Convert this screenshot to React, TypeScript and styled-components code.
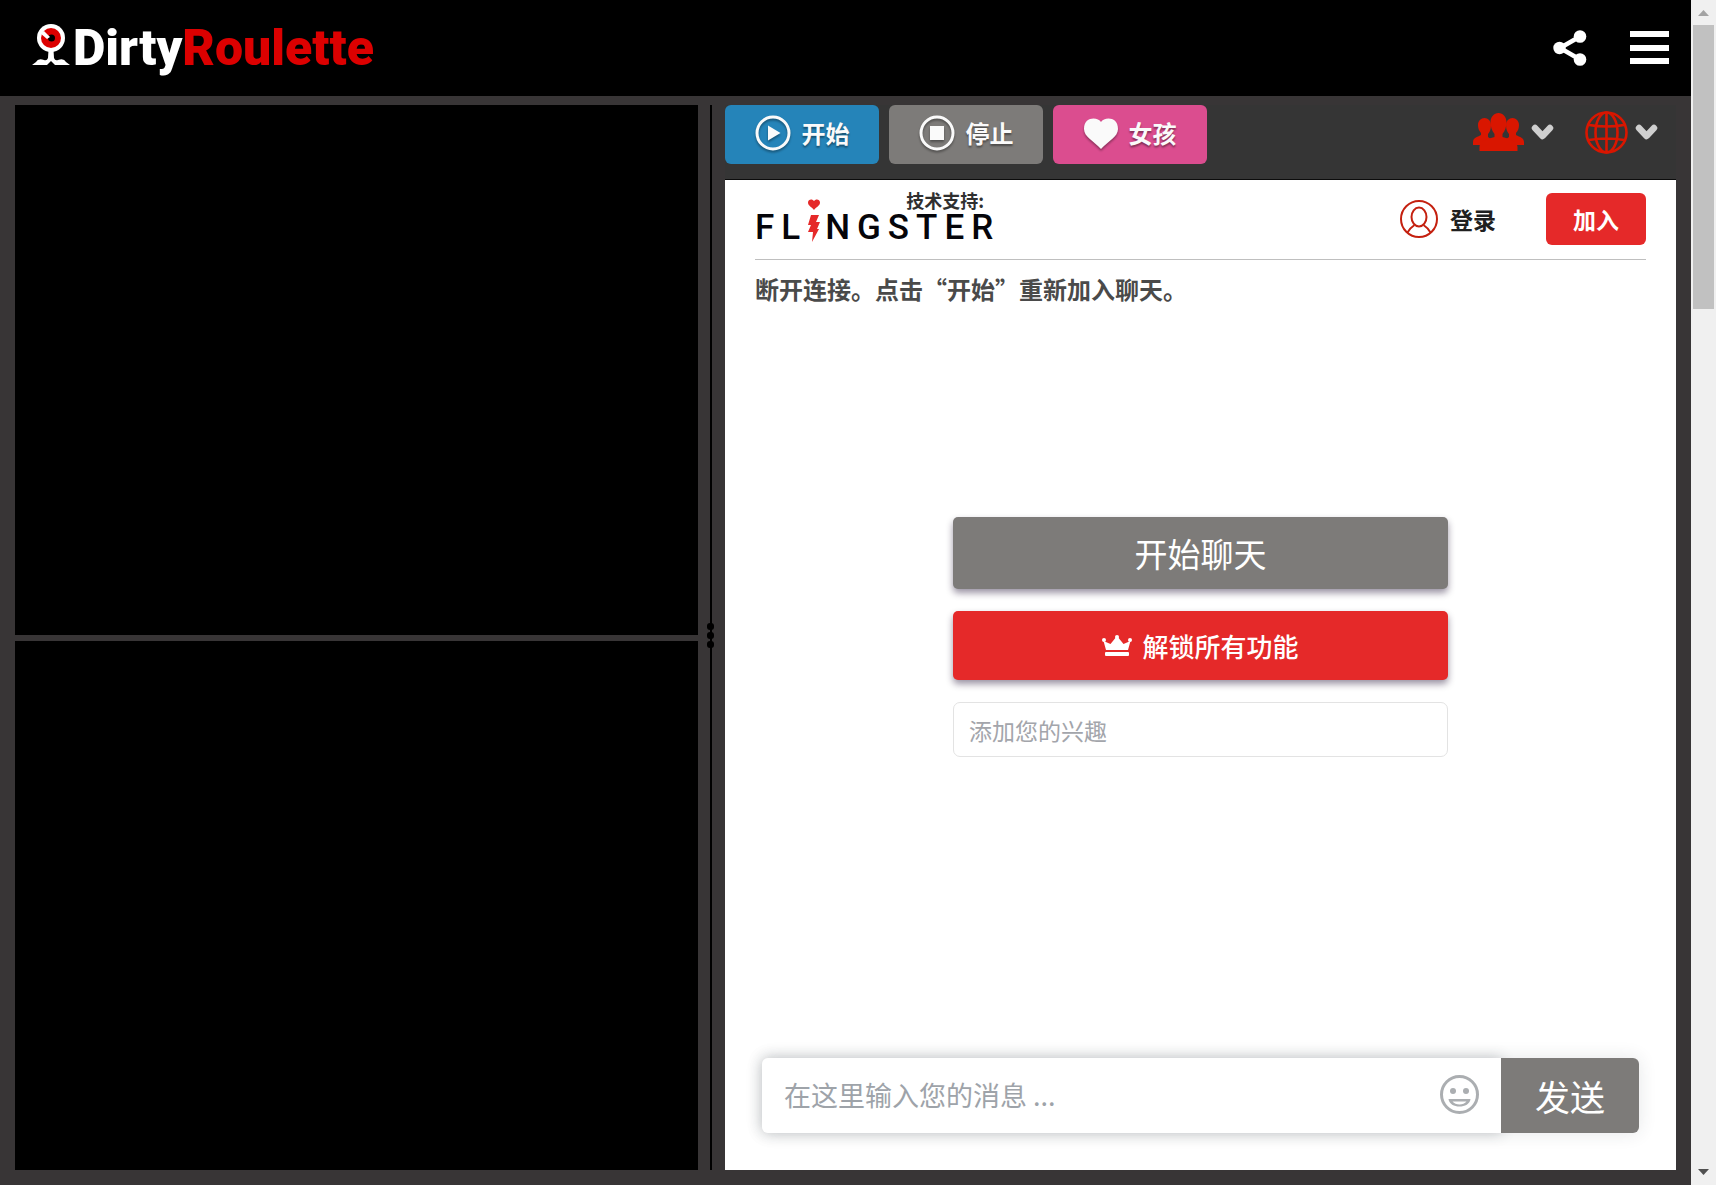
import React from "react";
import styled, { createGlobalStyle, css } from "styled-components";

const GlobalStyle = createGlobalStyle`
  *, *::before, *::after { box-sizing: border-box; }
  body {
    margin: 0;
    background: #383536;
    font-family: "Noto Sans CJK SC", "Liberation Sans", sans-serif;
  }
  button, input { font-family: inherit; }
`;

const plainButton = css`
  display: flex;
  align-items: center;
  padding: 0;
  border: 0;
  background: none;
  cursor: pointer;
`;

const Page = styled.div`
  display: grid;
  grid-template-columns: minmax(0, 1fr) 25px;
  height: 100vh;
  min-height: 720px;
`;

const Main = styled.div`
  display: flex;
  flex-direction: column;
  min-height: 0;
`;

const Header = styled.header`
  display: flex;
  align-items: center;
  justify-content: space-between;
  height: 96px;
  padding: 0 22px 0 32px;
  background: #000;
`;

const Logo = styled.a`
  display: flex;
  align-items: center;
  gap: 3px;
  color: #fff;
  font: 900 50px/64px Roboto, "Liberation Sans", sans-serif;
  text-decoration: none;
`;

const LogoAccent = styled.span`
  color: #dc0000;
`;

const HeaderActions = styled.div`
  display: flex;
  align-items: center;
  gap: 43px;
`;

const IconButton = styled.button`
  ${plainButton}
  gap: 7px;
`;

const Workspace = styled.main`
  display: grid;
  grid-template-columns: 683fr 27px 951fr;
  flex: 1;
  min-height: 0;
  padding: 9px 15px 15px;
`;

const Videos = styled.section`
  display: flex;
  flex-direction: column;
  gap: 6px;
`;

const Video = styled.div`
  flex: 1;
  background: #000;
`;

const Splitter = styled.div`
  display: grid;
  justify-items: center;
  align-items: center;
  padding: 0 2px 4px 0;
  background: linear-gradient(#000, #000) 12px 0 / 2px 100% no-repeat;
`;

const Grip = styled.div`
  display: flex;
  flex-direction: column;
  gap: 2px;
`;

const GripDot = styled.span`
  width: 7px;
  height: 7px;
  border-radius: 3px;
  background: #000;
`;

const ChatColumn = styled.section`
  display: flex;
  flex-direction: column;
  min-width: 0;
`;

const Toolbar = styled.div`
  display: flex;
  align-items: flex-start;
  justify-content: space-between;
  height: 75px;
  background: #353535;
  border-bottom: 1px solid #0c0c0c;
`;

const ToolbarGroup = styled.div<{ $gap: number }>`
  display: flex;
  gap: ${(p) => p.$gap}px;
`;

const PickerGroup = styled(ToolbarGroup)`
  align-items: center;
  height: 54px;
  padding-right: 18px;
`;

const ToolButton = styled.button<{ $color: string }>`
  ${plainButton}
  justify-content: center;
  gap: 11px;
  width: 154px;
  height: 59px;
  padding-bottom: 3px;
  border-radius: 6px;
  background: ${(p) => p.$color};
  color: #fafafa;
  font-size: 24px;
  font-weight: 700;
  line-height: 36px;
  text-shadow: 0 2px 2px rgba(0, 0, 0, 0.4);

  svg {
    filter: drop-shadow(0 2px 1px rgba(0, 0, 0, 0.35));
  }
`;

const ChatPanel = styled.div`
  display: flex;
  flex-direction: column;
  flex: 1;
  min-height: 0;
  padding: 0 30px 37px;
  background: #fff;
`;

const ChatHeader = styled.div`
  display: flex;
  align-items: center;
  justify-content: space-between;
  height: 80px;
  border-bottom: 1px solid #bfbfbf;
`;

const Sponsor = styled.a`
  display: flex;
  flex-direction: column;
  padding-bottom: 9px;
  color: #05050a;
  text-decoration: none;
`;

const SponsorNote = styled.span`
  align-self: flex-end;
  padding-right: 16px;
  color: #303030;
  font-size: 18px;
  font-weight: 700;
  line-height: 22px;
`;

const Wordmark = styled.span`
  display: flex;
  align-items: flex-end;
  height: 31px;
  font: 500 35px/28px Roboto, "Liberation Sans", sans-serif;
  letter-spacing: 7px;
`;

const Account = styled.div`
  display: flex;
  align-items: center;
  gap: 50px;
  padding-bottom: 2px;
`;

const LoginButton = styled.button`
  ${plainButton}
  gap: 12px;
  color: #202020;
  font-size: 23px;
  font-weight: 700;
  line-height: 38px;
`;

const JoinButton = styled.button`
  ${plainButton}
  justify-content: center;
  width: 100px;
  height: 52px;
  border-radius: 6px;
  background: #e52929;
  color: #fff;
  font-size: 23px;
  font-weight: 700;
`;

const Status = styled.p`
  margin: 11px 0 0;
  color: #4a4a4a;
  font-size: 24px;
  font-weight: 700;
  line-height: 36px;
`;

const Lobby = styled.div`
  display: flex;
  flex: 1;
  flex-direction: column;
  align-items: center;
  justify-content: center;
  padding-bottom: 91px;
`;

const LobbyForm = styled.form`
  display: flex;
  flex-direction: column;
  gap: 22px;
  width: 100%;
  max-width: 495px;
`;

const WideButton = styled.button<{ $color: string; $size: number; $height: number; $weight: number }>`
  ${plainButton}
  justify-content: center;
  gap: 10px;
  height: ${(p) => p.$height}px;
  border-radius: 5px;
  background: ${(p) => p.$color};
  box-shadow: 0 4px 7px rgba(30, 15, 50, 0.45);
  color: #fff;
  font-size: ${(p) => p.$size}px;
  font-weight: ${(p) => p.$weight};
`;

const InterestInput = styled.input`
  height: 55px;
  padding: 0 15px;
  border: 1px solid #e3e3e3;
  border-radius: 7px;
  outline: 0;
  color: #333;
  font-size: 23px;

  &::placeholder { color: #a3a5ab; }
`;

const Composer = styled.form`
  display: flex;
  height: 75px;
  margin: 0 7px;
  border-radius: 6px;
  box-shadow: 0 0 18px rgba(40, 50, 60, 0.12);
`;

const MessageBox = styled.div`
  display: flex;
  flex: 1;
  align-items: center;
  min-width: 0;
  padding: 0 22px 2px;
  border-radius: 6px 0 0 6px;
  background: #fff;
  box-shadow: 0 0 14px rgba(40, 50, 60, 0.25);
`;

const MessageInput = styled.input`
  flex: 1;
  min-width: 0;
  padding: 0;
  border: 0;
  outline: 0;
  background: none;
  color: #333;
  font-size: 27px;

  &::placeholder { color: #9ea3a9; }
`;

const SendButton = styled.button`
  ${plainButton}
  position: relative;
  justify-content: center;
  width: 138px;
  border-radius: 0 6px 6px 0;
  background: #7d7b79;
  color: #fff;
  font-size: 35px;
`;

const ScrollTrack = styled.div`
  display: flex;
  flex-direction: column;
  align-items: center;
  padding: 10px 0;
  background: #f0f0f0;
`;

const ScrollThumb = styled.div`
  width: 21px;
  height: 284px;
  margin: 9px 0 auto;
  background: #c1c1c1;
`;

const EyeLogo = () => (
  <svg width="38" height="48" viewBox="0 0 38 48" aria-hidden="true">
    <path
      d="M16.500 26h5l.5 8q1 3 4 2q6-2 8 2l4 3H23l-4-4-4 4H0l4-3q2-4 8-2q3 1 4-2z"
      fill="#fff"
    />
    <circle cx="19" cy="14" r="14" fill="#fff" />
    <circle cx="19" cy="14" r="10" fill="#dc0000" />
    <circle cx="19.500" cy="14" r="3.500" fill="#000" />
    <path d="M8 9l4-2 6 6-3 2z" fill="#fff" />
  </svg>
);

const ShareIcon = () => (
  <svg width="34" height="36" viewBox="0 0 34 36" aria-hidden="true">
    <path d="M27 6.500L7 18l20 11.500" fill="none" stroke="#fff" strokeWidth="4.500" />
    <circle cx="6.500" cy="18" r="6.200" fill="#fff" />
    <circle cx="27" cy="6.500" r="6.300" fill="#fff" />
    <circle cx="27" cy="29.500" r="6.300" fill="#fff" />
  </svg>
);

const MenuIcon = () => (
  <svg width="39" height="34" viewBox="0 0 39 34" aria-hidden="true">
    <path d="M0 0h39v6H0zM0 14h39v6H0zM0 27h39v6H0z" fill="#fff" />
  </svg>
);

const RingIcon = ({ children }: { children: React.ReactNode }) => (
  <svg width="36" height="36" viewBox="0 0 36 36" aria-hidden="true">
    <circle cx="18" cy="18" r="16" fill="none" stroke="#fafafa" strokeWidth="3" />
    {children}
  </svg>
);

const HeartIcon = () => (
  <svg width="34" height="31" viewBox="0 0 34 31" aria-hidden="true">
    <path d="M17 4C20-1 34-2 34 11c0 8-10 12-17 20C10 23 0 19 0 11 0-2 14-1 17 4z" fill="#fafafa" />
  </svg>
);

const ChevronIcon = () => (
  <svg width="23" height="17" viewBox="0 0 23 17" aria-hidden="true">
    <path
      d="M4 4l7.500 8L19 4"
      fill="none"
      stroke="#cfcfcf"
      strokeWidth="6.500"
      strokeLinecap="round"
      strokeLinejoin="round"
    />
  </svg>
);

const PeopleIcon = () => (
  <svg width="51" height="38" viewBox="0 0 51 38" fill="#d91600" aria-hidden="true">
    <path d="M5 12C5 8 8 5 11.500 5S18 8 18 12c0 4-1 7-3 9v3l4 3v5H0v-3c0-4 4-5 8-7v-2c-2-2-3-5-3-8z" />
    <path d="M46 12c0-4-3-7-6.500-7S33 8 33 12c0 4 1 7 3 9v3l-4 3v5h19v-3c0-4-4-5-8-7v-2c2-2 3-5 3-8z" />
    <path d="M17.500 9c0-5 3.500-9 8-9s8 4 8 9c0 5-1.500 9-4 12v3c7 2 15 4 15 10v4h-38v-4c0-6 8-8 15-10v-3c-2.500-3-4-7-4-12z" />
  </svg>
);

const GlobeIcon = () => (
  <svg width="43" height="43" viewBox="0 0 43 43" fill="none" stroke="#d91600" strokeWidth="2.600" aria-hidden="true">
    <circle cx="21.500" cy="21.500" r="20" />
    <ellipse cx="21.500" cy="21.500" rx="11" ry="20" />
    <path d="M21.500 1v41M4 14q17.500 3 35 0M4 29q17.500-3 35 0" />
  </svg>
);

const UserIcon = () => (
  <svg width="38" height="38" viewBox="0 0 38 38" fill="none" stroke="#c4200f" strokeWidth="2" aria-hidden="true">
    <circle cx="19" cy="19" r="18" />
    <ellipse cx="19" cy="17" rx="7.500" ry="9.500" />
    <path d="M7.500 32.500Q10 28 14.500 25M30.500 32.500Q28 28 23.500 25" />
  </svg>
);

const BoltIcon = () => (
  <svg width="14" height="43" viewBox="0 0 14 43" fill="#e52929" aria-hidden="true">
    <path d="M7 2c1.500-2.500 6-2 6 1.500C13 7 9 8 7 11 5 8 1 7 1 3.500 1 0 5.500-.5 7 2z" />
    <path d="M4 16h8l-3 7h4l-3 7h2L5 43l1-10H1l3-7H1z" />
  </svg>
);

const BoltSlot = styled.span`
  display: flex;
  margin-right: 4px;
`;

const CrownIcon = () => (
  <svg width="30" height="22" viewBox="0 0 30 22" fill="#fff" aria-hidden="true">
    <path d="M4 15L1.500 6l7 3L15 1l6.500 8 7-3L26 15z" />
    <circle cx="2" cy="5" r="2" />
    <circle cx="15" cy="2" r="2" />
    <circle cx="28" cy="5" r="2" />
    <rect x="3" y="17" width="24" height="4" rx="1" />
  </svg>
);

const SmileIcon = () => (
  <svg width="39" height="39" viewBox="0 0 39 39" fill="#abaeb1" aria-hidden="true">
    <circle cx="19.500" cy="19.500" r="18" fill="none" stroke="#abaeb1" strokeWidth="3" />
    <circle cx="13" cy="16" r="3" />
    <circle cx="26" cy="16" r="3" />
    <path d="M8.500 24h22c-1 10-21 10-22 0zm4 2.500c3 4 11 4 14 0z" fillRule="evenodd" />
  </svg>
);

const ScrollArrow = ({ down = false }: { down?: boolean }) => (
  <svg width="11" height="6" viewBox="0 0 11 6" aria-hidden="true">
    <path d={down ? "M0 0h11L5.500 6z" : "M0 6h11L5.500 0z"} fill={down ? "#505050" : "#a3a3a3"} />
  </svg>
);

const stay = (event: React.FormEvent) => event.preventDefault();

export default function App() {
  return (
    <>
      <GlobalStyle />
      <Page lang="zh-CN">
        <Main>
          <Header>
            <Logo href="#">
              <EyeLogo />
              <span>
                Dirty<LogoAccent>Roulette</LogoAccent>
              </span>
            </Logo>
            <HeaderActions>
              <IconButton aria-label="分享">
                <ShareIcon />
              </IconButton>
              <IconButton aria-label="菜单">
                <MenuIcon />
              </IconButton>
            </HeaderActions>
          </Header>

          <Workspace>
            <Videos>
              <Video />
              <Video />
            </Videos>

            <Splitter>
              <Grip>
                <GripDot />
                <GripDot />
                <GripDot />
              </Grip>
            </Splitter>

            <ChatColumn>
              <Toolbar>
                <ToolbarGroup $gap={10}>
                  <ToolButton $color="#2584b9">
                    <RingIcon>
                      <path d="M13 10.500v15L25.500 18z" fill="#fafafa" />
                    </RingIcon>
                    开始
                  </ToolButton>
                  <ToolButton $color="#7d7b79">
                    <RingIcon>
                      <path d="M11 11h14v14H11z" fill="#fafafa" />
                    </RingIcon>
                    停止
                  </ToolButton>
                  <ToolButton $color="#db4d8f">
                    <HeartIcon />
                    女孩
                  </ToolButton>
                </ToolbarGroup>
                <PickerGroup $gap={31}>
                  <IconButton aria-label="性别">
                    <PeopleIcon />
                    <ChevronIcon />
                  </IconButton>
                  <IconButton aria-label="国家">
                    <GlobeIcon />
                    <ChevronIcon />
                  </IconButton>
                </PickerGroup>
              </Toolbar>

              <ChatPanel>
                <ChatHeader>
                  <Sponsor href="#">
                    <SponsorNote>技术支持:</SponsorNote>
                    <Wordmark>
                      <span>FL</span>
                      <BoltSlot>
                        <BoltIcon />
                      </BoltSlot>
                      <span>NGSTER</span>
                    </Wordmark>
                  </Sponsor>
                  <Account>
                    <LoginButton>
                      <UserIcon />
                      登录
                    </LoginButton>
                    <JoinButton>加入</JoinButton>
                  </Account>
                </ChatHeader>

                <Status>断开连接。点击“开始”重新加入聊天。</Status>

                <Lobby>
                  <LobbyForm onSubmit={stay}>
                    <WideButton type="button" $color="#7d7b79" $size={33} $height={72} $weight={400}>
                      开始聊天
                    </WideButton>
                    <WideButton type="button" $color="#e52929" $size={26} $height={69} $weight={500}>
                      <CrownIcon />
                      解锁所有功能
                    </WideButton>
                    <InterestInput aria-label="添加您的兴趣" placeholder="添加您的兴趣" />
                  </LobbyForm>
                </Lobby>

                <Composer onSubmit={stay}>
                  <MessageBox>
                    <MessageInput aria-label="在这里输入您的消息" placeholder="在这里输入您的消息 ..." />
                    <IconButton type="button" aria-label="表情">
                      <SmileIcon />
                    </IconButton>
                  </MessageBox>
                  <SendButton type="submit">发送</SendButton>
                </Composer>
              </ChatPanel>
            </ChatColumn>
          </Workspace>
        </Main>

        <ScrollTrack>
          <ScrollArrow />
          <ScrollThumb />
          <ScrollArrow down />
        </ScrollTrack>
      </Page>
    </>
  );
}
